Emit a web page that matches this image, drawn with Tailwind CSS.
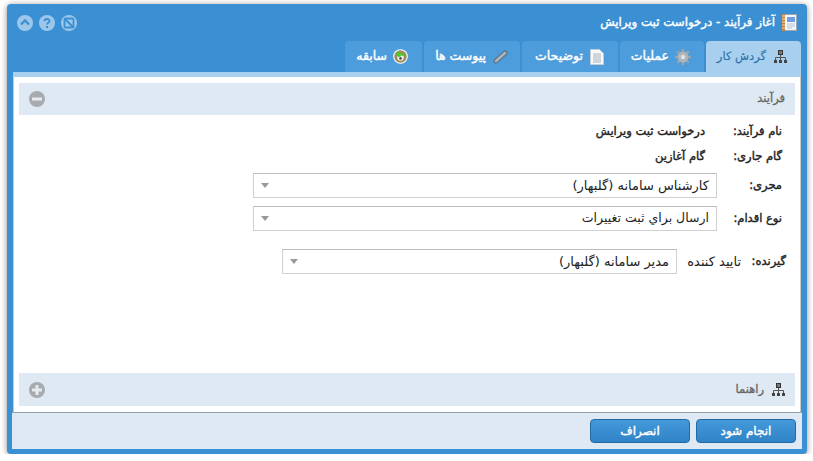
<!DOCTYPE html>
<html lang="fa" dir="rtl">

<head>
    <meta charset="UTF-8">
    <title>آغاز فرآیند - درخواست ثبت ویرایش</title>
    <script src="https://cdn.jsdelivr.net/npm/@tailwindcss/browser@4"></script>
</head>

<body class="bg-white font-['DejaVu_Sans',sans-serif] text-[13px] text-[#222] overflow-hidden">
    <div class="mr-[6px] mt-[4px] w-[800px] h-[450px] flex flex-col bg-[#3b90d4] rounded-[4px] shadow-[0_1px_6px_rgba(0,0,0,0.45)]">
        <!-- title bar -->
        <div class="h-[37px] flex items-center justify-between pr-[10px] pl-[10px]">
            <div class="flex items-center gap-[7px] text-white text-[11.8px] [-webkit-text-stroke:0.4px]">
                <svg width="15" height="17" viewBox="0 0 15 17">
                    <rect x="2" y="0.5" width="12.5" height="16" fill="#f4f7fb" stroke="#9aa7b5" />
                    <rect x="0" y="0" width="3" height="17" fill="#c4853c" />
                    <path d="M0 2h3M0 5h3M0 8h3M0 11h3M0 14h3" stroke="#f0d6b0" />
                    <rect x="5" y="3" width="8" height="5" fill="#6f9fe0" />
                    <path d="M5 10h8M5 12h8M5 14h5" stroke="#b8c4d2" />
                </svg>
                <span>آغاز فرآیند - درخواست ثبت ویرایش</span>
            </div>
            <div class="flex flex-row-reverse gap-[6px]">
                <svg width="16" height="16" viewBox="0 0 16 16">
                    <circle cx="8" cy="8" r="8" fill="#9cc7ea" />
                    <path d="M4 9.5 8 5.5l4 4" fill="none" stroke="#3b90d4" stroke-width="2.4" />
                </svg>
                <svg width="16" height="16" viewBox="0 0 16 16">
                    <circle cx="8" cy="8" r="8" fill="#9cc7ea" />
                    <path d="M5.5 6.2C5.6 3.3 10.5 3.3 10.5 6c0 1.8-2.5 1.8-2.5 3.6" fill="none" stroke="#3b90d4" stroke-width="1.9" />
                    <rect x="7" y="11" width="2" height="2" fill="#3b90d4" />
                </svg>
                <svg width="16" height="16" viewBox="0 0 16 16">
                    <circle cx="8" cy="8" r="8" fill="#9cc7ea" />
                    <rect x="3.5" y="3.5" width="9" height="9" rx="1" fill="none" stroke="#3b90d4" stroke-width="1.8" />
                    <path d="M4 4l8 8" stroke="#3b90d4" stroke-width="2" />
                </svg>
            </div>
        </div>

        <!-- tabs -->
        <div class="h-[31px] flex gap-[2px] mr-[6px] text-white text-[12.5px] [-webkit-text-stroke:0.4px]">
            <div class="w-[95px] flex items-center gap-[8px] pr-[14px] bg-[#a9cfee] text-[#2b72ad] text-[11.5px] [-webkit-text-stroke:0.15px] rounded-t-[4px]">
                <svg width="13" height="13" viewBox="0 0 13 13">
                    <path d="M6.5 4v4M1.5 10V7.5h10V10M6.5 8v2" fill="none" stroke="#555" />
                    <rect x="4.5" y="0.5" width="4" height="4" fill="#777" stroke="#333" />
                    <rect x="0" y="10" width="3" height="3" fill="#444" />
                    <rect x="5" y="10" width="3" height="3" fill="#444" />
                    <rect x="10" y="10" width="3" height="3" fill="#444" />
                </svg>
                <span>گردش کار</span>
            </div>
            <div class="w-[84px] flex items-center gap-[6px] pr-[13px] bg-[#4d9cdb] rounded-t-[4px]">
                <svg width="16" height="16" viewBox="0 0 16 16">
                    <path d="M8 0v16M0 8h16M2.3 2.3l11.4 11.4M2.3 13.7 13.7 2.3" stroke="#98a3ac" stroke-width="2.6" />
                    <circle cx="8" cy="8" r="5.4" fill="#aeb6bc" />
                    <circle cx="8" cy="8" r="2.2" fill="#dfe4e8" />
                </svg>
                <span>عملیات</span>
            </div>
            <div class="w-[96px] flex items-center gap-[7px] pr-[14px] bg-[#4d9cdb] rounded-t-[4px]">
                <svg width="14" height="16" viewBox="0 0 14 16">
                    <path d="M.5.5h9l4 4v11H.5z" fill="#f7f9fb" stroke="#c3cdd6" />
                    <path d="M3 5h8M3 7h8M3 9h8M3 11h8M3 13h8" stroke="#a9b2ba" />
                </svg>
                <span>توضیحات</span>
            </div>
            <div class="w-[96px] flex items-center gap-[7px] pr-[12px] bg-[#4d9cdb] rounded-t-[4px]">
                <svg width="15" height="14" viewBox="0 0 15 14">
                    <path d="M3 11 12 3" stroke="#5f6f7e" stroke-width="5" stroke-linecap="round" />
                    <path d="M3 11 12 3" stroke="#a9b5c0" stroke-width="2.6" stroke-linecap="round" />
                </svg>
                <span>پیوست ها</span>
            </div>
            <div class="w-[77px] flex items-center gap-[6px] pr-[14px] bg-[#4d9cdb] rounded-t-[4px]">
                <svg width="15" height="15" viewBox="0 0 16 16">
                    <circle cx="8" cy="8" r="7.8" fill="#fff" />
                    <circle cx="8" cy="8" r="6.6" fill="#a08a5c" />
                    <circle cx="8" cy="9" r="3.4" fill="#f2f2f2" />
                    <path d="M2 6 7 1.5v2.6c3.4 0 5.6 1 7 3.6L8 7v2.4z" fill="#56c22d" />
                    <circle cx="8" cy="10" r="1.3" fill="#333" />
                </svg>
                <span>سابقه</span>
            </div>
        </div>

        <!-- tab body -->
        <div class="mx-[6px] flex-1 flex flex-col bg-white border-t-[5px] border-t-[#a9cfee] border-x border-x-[#c9c9c9] px-[5px] pt-[6px] pb-[6px]">
            <div class="h-[32px] flex items-center justify-between bg-[#dfe9f3] px-[10px] text-[#666] text-[11.5px] [-webkit-text-stroke:0.3px]">
                <span>فرآیند</span>
                <svg width="16" height="16" viewBox="0 0 16 16">
                    <circle cx="8" cy="8" r="8" fill="#a7abaf" />
                    <rect x="3" y="6.5" width="10" height="3" fill="#e6ebf0" />
                </svg>
            </div>

            <div class="flex-1 pr-[13px] pt-[4px]">
                <div class="h-[25px] flex items-center text-[11.5px] [-webkit-text-stroke:0.4px]">
                    <div class="w-[77px]">نام فرآیند:</div>
                    <div>درخواست ثبت ویرایش</div>
                </div>
                <div class="h-[25px] flex items-center text-[11.5px] [-webkit-text-stroke:0.4px]">
                    <div class="w-[77px]">گام جاری:</div>
                    <div>گام آغازین</div>
                </div>
                <div class="h-[25px] mt-[4px] flex items-center">
                    <div class="w-[65px] text-[11.5px] [-webkit-text-stroke:0.4px]">مجری:</div>
                    <div class="w-[464px] h-[25px] flex items-center justify-between px-[7px] border border-[#d0d0d0] border-t-[#bdbdbd]">
                        <span>کارشناس سامانه (گلبهار)</span>
                        <span class="w-0 h-0 border-x-[4px] border-x-transparent border-t-[5px] border-t-[#999]"></span>
                    </div>
                </div>
                <div class="h-[25px] mt-[8px] flex items-center">
                    <div class="w-[65px] text-[11.5px] [-webkit-text-stroke:0.4px]">نوع اقدام:</div>
                    <div class="w-[464px] h-[25px] flex items-center justify-between px-[7px] border border-[#d0d0d0] border-t-[#bdbdbd]">
                        <span class="text-[12.5px]">ارسال براي ثبت تغییرات</span>
                        <span class="w-0 h-0 border-x-[4px] border-x-transparent border-t-[5px] border-t-[#999]"></span>
                    </div>
                </div>
                <div class="h-[25px] mt-[18px] -mr-[4px] flex items-center">
                    <div class="w-[45px] text-[11.5px] [-webkit-text-stroke:0.4px]">گیرنده:</div>
                    <div class="w-[64px]">تایید کننده</div>
                    <div class="w-[395px] h-[25px] flex items-center justify-between px-[7px] border border-[#d0d0d0] border-t-[#bdbdbd]">
                        <span>مدیر سامانه (گلبهار)</span>
                        <span class="w-0 h-0 border-x-[4px] border-x-transparent border-t-[5px] border-t-[#999]"></span>
                    </div>
                </div>
            </div>

            <div class="h-[33px] flex items-center justify-between bg-[#dfe9f3] px-[10px] text-[#666] text-[11.5px] [-webkit-text-stroke:0.3px]">
                <div class="flex items-center gap-[8px]">
                    <svg width="13" height="13" viewBox="0 0 13 13">
                        <path d="M6.5 4v4M1.5 10V7.5h10V10M6.5 8v2" fill="none" stroke="#555" />
                        <rect x="4.5" y="0.5" width="4" height="4" fill="#777" stroke="#333" />
                        <rect x="0" y="10" width="3" height="3" fill="#444" />
                        <rect x="5" y="10" width="3" height="3" fill="#444" />
                        <rect x="10" y="10" width="3" height="3" fill="#444" />
                    </svg>
                    <span>راهنما</span>
                </div>
                <svg width="16" height="16" viewBox="0 0 16 16">
                    <circle cx="8" cy="8" r="8" fill="#a7abaf" />
                    <path d="M3 8h10M8 3v10" stroke="#e6ebf0" stroke-width="3" />
                </svg>
            </div>
        </div>

        <!-- footer -->
        <div class="h-[37px] mx-[5px] mb-[5px] flex items-center gap-[6px] pr-[6px] bg-[#dfe9f3] border-t border-t-[#8fa3b5] text-[12px] [-webkit-text-stroke:0.4px]">
            <button class="w-[100px] h-[24px] bg-gradient-to-b from-[#4499db] to-[#2f83c6] border border-[#1f6aa5] rounded-[4px] text-white">انجام شود</button>
            <button class="w-[100px] h-[24px] bg-gradient-to-b from-[#4499db] to-[#2f83c6] border border-[#1f6aa5] rounded-[4px] text-white">انصراف</button>
        </div>
    </div>
</body>

</html>
